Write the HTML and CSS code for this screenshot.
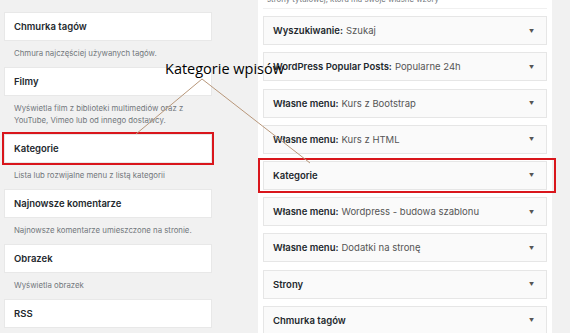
FILE: index.html
```html
<!DOCTYPE html>
<html lang="pl">
<head>
  <meta charset="UTF-8">
  <title>Widżety - Kategorie wpisów</title>
  <link rel="stylesheet" href="styles.css">
</head>
<body>
  <div class="screen">
    <div class="available">
      <div class="widget">Chmurka tagów</div>
      <p class="desc">Chmura najczęściej używanych tagów.</p>
      <div class="widget">Filmy</div>
      <p class="desc">Wyświetla film z biblioteki multimediów oraz z<br>YouTube, Vimeo lub od innego dostawcy.</p>
      <div class="widget marked">Kategorie</div>
      <p class="desc">Lista lub rozwijalne menu z listą kategorii</p>
      <div class="widget">Najnowsze komentarze</div>
      <p class="desc">Najnowsze komentarze umieszczone na stronie.</p>
      <div class="widget">Obrazek</div>
      <p class="desc">Wyświetla obrazek</p>
      <div class="widget">RSS</div>
    </div>

    <div class="sidebar">
      <p class="sidebar-desc">strony tytułowej, która ma swoje własne wzory</p>
      <div class="item"><b>Wyszukiwanie:</b> Szukaj<span class="arrow">&#9660;</span></div>
      <div class="item"><b>WordPress Popular Posts:</b> Popularne 24h<span class="arrow">&#9660;</span></div>
      <div class="item"><b>Własne menu:</b> Kurs z Bootstrap<span class="arrow">&#9660;</span></div>
      <div class="item"><b>Własne menu:</b> Kurs z HTML<span class="arrow">&#9660;</span></div>
      <div class="item marked-wide"><b>Kategorie</b><span class="arrow">&#9660;</span></div>
      <div class="item"><b>Własne menu:</b> Wordpress - budowa szablonu<span class="arrow">&#9660;</span></div>
      <div class="item"><b>Własne menu:</b> Dodatki na stronę<span class="arrow">&#9660;</span></div>
      <div class="item"><b>Strony</b><span class="arrow">&#9660;</span></div>
      <div class="item"><b>Chmurka tagów</b><span class="arrow">&#9660;</span></div>
    </div>

    <!-- annotation drawn over the screenshot -->
    <div class="note">
      <span class="note-label">Kategorie wpisów</span>
      <svg class="note-lines" width="570" height="333">
        <line x1="202" y1="79" x2="136" y2="134" />
        <line x1="202" y1="79" x2="310" y2="163" />
      </svg>
    </div>
  </div>
</body>
</html>
```

FILE: styles.css
```css
body {
  margin: 0;
  background-color: #f1f1f1;
  font-family: 'Inter', 'Liberation Sans', sans-serif;
  font-size: 9.5px;
  color: #23282d;
}

.screen {
  position: relative;
  display: flex;
  width: 570px;
  height: 333px;
  overflow: hidden;
}

/* Available widgets */
.available {
  width: 208px;
  margin-left: 4px;
  padding-top: 12px;
}

.widget {
  height: 27px;
  line-height: 27px;
  padding: 0 9px;
  background-color: #fff;
  border: 1px solid #e8e8e8;
  font-weight: 600;
}

.widget.marked {
  outline: 2px solid #d9161c;
}

.desc {
  margin: 0;
  padding: 6px 10px 8px;
  line-height: 12px;
  font-size: 7.8px;
  color: #72777c;
}

/* Sidebar area */
.sidebar {
  width: 284px;
  margin-left: 46px;
  padding: 0 5px;
  background-color: #fff;
}

.sidebar-desc {
  margin: -7px 0 0;
  padding: 0 4px 3px;
  line-height: 12px;
  font-size: 7.8px;
  color: #72777c;
  border-bottom: 1px solid #f0f0f0;
}

.item {
  position: relative;
  display: flex;
  align-items: center;
  height: 27px;
  margin-top: 7.2px;
  padding: 0 9px;
  background-color: #fafafa;
  border: 1px solid #e6e6e6;
  color: #555;
}

.item b {
  font-weight: 600;
  color: #23282d;
  margin-right: 3px;
}

.arrow {
  margin-left: auto;
  margin-right: 3px;
  font-size: 5px;
  color: #555;
}

.item.marked-wide::after {
  content: '';
  position: absolute;
  left: -6px;
  right: -10px;
  top: -4px;
  bottom: -4px;
  border: 2px solid #d9161c;
}

/* Annotation */
.note {
  position: absolute;
  top: 0;
  left: 0;
  width: 570px;
  height: 333px;
  pointer-events: none;
}

.note-label {
  position: absolute;
  left: 165px;
  top: 59px;
  font-family: 'Open Sans', sans-serif;
  font-size: 14.5px;
  color: #000;
  white-space: nowrap;
}

.note-lines {
  position: absolute;
  top: 0;
  left: 0;
}

.note-lines line {
  stroke: #b8977a;
  stroke-width: 1;
}
```
